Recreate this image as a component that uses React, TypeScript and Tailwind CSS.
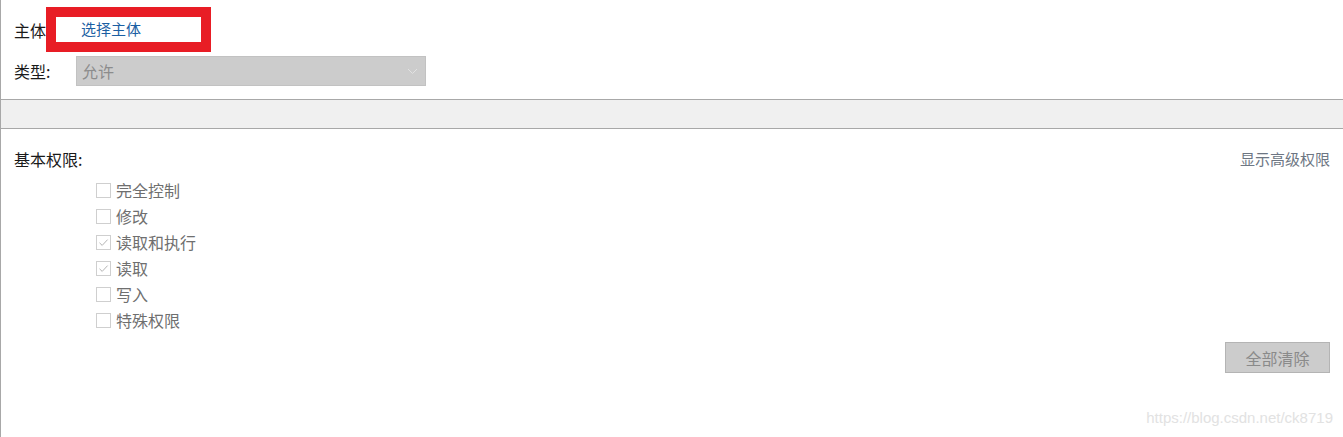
const font = "font-['Microsoft_YaHei','Noto_Sans_CJK_SC',sans-serif]";

interface PermissionItem {
  label: string;
  checked: boolean;
}

const permissions: PermissionItem[] = [
  { label: '完全控制', checked: false },
  { label: '修改', checked: false },
  { label: '读取和执行', checked: true },
  { label: '读取', checked: true },
  { label: '写入', checked: false },
  { label: '特殊权限', checked: false },
];

function CheckBox({ checked }: { checked: boolean }) {
  return (
    <span className="w-[15px] h-[15px] border border-[#cfcfcf] bg-white flex items-center justify-center shrink-0">
      {checked && (
        <svg width="11" height="11" viewBox="0 0 11 11" fill="none">
          <path d="M1.5 5.8 L4.2 8.4 L9.6 2.6" stroke="#b4b4b4" strokeWidth="1" />
        </svg>
      )}
    </span>
  );
}

function PermissionRow({ item }: { item: PermissionItem }) {
  return (
    <div className="h-[26px] flex items-center gap-[5px]">
      <CheckBox checked={item.checked} />
      <span className="text-[16px] leading-[20px] text-[#6f6f6f]">{item.label}</span>
    </div>
  );
}

export default function App() {
  return (
    <div className={`relative w-[1343px] h-[437px] bg-white border-l border-[#a8a8a8] overflow-hidden ${font}`}>
      {/* principal / type */}
      <div className="h-[100px] border-b border-[#a8a8a8] pl-[13px] pt-[7px]">
        <div className="flex items-center h-[45px]">
          <span className="text-[16px] text-[#1a1a1a] w-[32px]">主体</span>
          <div className="w-[165px] h-[45px] border-[10px] border-[#e81d25] bg-white flex items-center pl-[25px]">
            <span className="text-[15px] text-[#1c5fa3]">选择主体</span>
          </div>
        </div>
        <div className="flex items-center mt-[4px] h-[30px]">
          <span className="text-[16px] text-[#1a1a1a] w-[62px]">类型:</span>
          <div className="w-[350px] h-[30px] bg-[#cccccc] border border-[#c2c2c2] flex items-center justify-between pl-[5px] pr-[7px]">
            <span className="text-[16px] text-[#8c8c8c]">允许</span>
            <svg width="11" height="7" viewBox="0 0 11 7" fill="none">
              <path d="M1 1 L5.5 5.5 L10 1" stroke="#e2e2e2" strokeWidth="1" />
            </svg>
          </div>
        </div>
      </div>

      <div className="h-[29px] bg-[#f0f0f0] border-b border-[#a8a8a8]" />

      {/* basic permissions */}
      <div className="pl-[13px] pr-[13px] pt-[20px]">
        <div className="flex justify-between h-[20px] items-center">
          <span className="text-[16px] text-[#1a1a1a]">基本权限:</span>
          <span className="text-[15px] text-[#6d7683]">显示高级权限</span>
        </div>
        <div className="ml-[82px] mt-[8px]">
          {permissions.map(p => (
            <PermissionRow key={p.label} item={p} />
          ))}
        </div>
        <div className="flex justify-end mt-[9px]">
          <div className="w-[105px] h-[31px] bg-[#cccccc] border border-[#b4b4b4] flex items-center justify-center">
            <span className="text-[16px] text-[#8a8a8a]">全部清除</span>
          </div>
        </div>
      </div>

      <span className="absolute right-[10px] bottom-[8px] text-[15px] text-[#e2e2e2] font-['Liberation_Sans',sans-serif]">
        https://blog.csdn.net/ck8719
      </span>
    </div>
  );
}
